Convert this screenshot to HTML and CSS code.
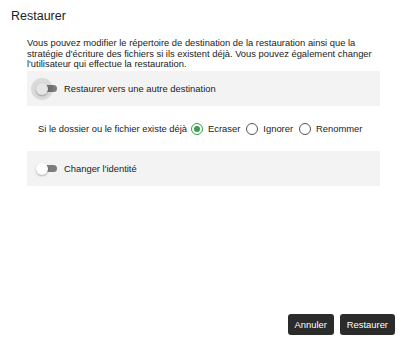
FILE: index.html
```html
<!DOCTYPE html>
<html lang="fr">
<head>
    <meta charset="UTF-8">
    <meta name="viewport" content="width=device-width, initial-scale=1.0">
    <title>Restaurer</title>
    <link rel="stylesheet" href="styles.css">
</head>
<body>
    <div class="dialog">
        <h1 class="dialog-title">Restaurer</h1>

        <div class="dialog-body">
            <p class="intro">Vous pouvez modifier le répertoire de destination de la restauration ainsi que la stratégie d'écriture des fichiers si ils existent déjà. Vous pouvez également changer l'utilisateur qui effectue la restauration.</p>

            <div class="panel">
                <span class="toggle focused"><span class="thumb"></span></span>
                <span class="panel-label">Restaurer vers une autre destination</span>
            </div>

            <div class="radio-row">
                <span class="radio-label">Si le dossier ou le fichier existe déjà</span>
                <label class="radio checked"><span class="dot"></span>Ecraser</label>
                <label class="radio"><span class="dot"></span>Ignorer</label>
                <label class="radio"><span class="dot"></span>Renommer</label>
            </div>

            <div class="panel">
                <span class="toggle"><span class="thumb"></span></span>
                <span class="panel-label">Changer l'identité</span>
            </div>
        </div>

        <div class="dialog-actions">
            <button class="btn">Annuler</button>
            <button class="btn">Restaurer</button>
        </div>
    </div>
</body>
</html>
```

FILE: styles.css
```css
body {
    margin: 0;
    font-family: "Liberation Sans", Arial, sans-serif;
    color: #222;
    background: #fff;
}
.dialog {
    height: 340px;
    box-sizing: border-box;
    padding: 8px 11px 5px 11px;
    display: flex;
    flex-direction: column;
}
.dialog-title {
    font-size: 12.5px;
    font-weight: normal;
    margin: 0 0 14px 0;
    line-height: 16px;
}
.dialog-body {
    margin-left: 16px;
    width: 353px;
    font-size: 9.4px;
}
.intro {
    margin: 0;
    line-height: 10.7px;
    padding-bottom: 1px;
}
.panel {
    background: #f3f3f3;
    height: 35px;
    display: flex;
    align-items: center;
    padding-left: 10px;
}
.radio-row {
    height: 45px;
    display: flex;
    align-items: center;
    padding-left: 11px;
}
.radio-label {
    margin-right: 4px;
}
.radio {
    display: flex;
    align-items: center;
    margin-right: 6px;
}
.radio .dot {
    width: 12px;
    height: 12px;
    border: 1px solid #555;
    border-radius: 50%;
    margin-right: 5px;
    box-sizing: border-box;
    display: flex;
    align-items: center;
    justify-content: center;
}
.radio.checked .dot {
    border-color: #36a04a;
}
.radio.checked .dot::after {
    content: "";
    width: 6px;
    height: 6px;
    border-radius: 50%;
    background: #36a04a;
}
.toggle {
    position: relative;
    width: 20px;
    height: 7px;
    background: #7d7d7d;
    border-radius: 4px;
    margin-right: 7px;
}
.toggle .thumb {
    position: absolute;
    left: -1px;
    top: -2.5px;
    width: 12px;
    height: 12px;
    border-radius: 50%;
    background: #fff;
    box-shadow: 0 1px 2px rgba(0,0,0,0.3);
}
.toggle.focused .thumb::before {
    content: "";
    position: absolute;
    left: -5px;
    top: -5px;
    width: 22px;
    height: 22px;
    border-radius: 50%;
    background: rgba(0,0,0,0.1);
}
.dialog-actions {
    margin-top: auto;
    display: flex;
    justify-content: flex-end;
    gap: 6px;
}
.btn {
    font-family: inherit;
    font-size: 9.4px;
    color: #fff;
    background: #2b2b2b;
    border: none;
    border-radius: 3px;
    height: 21px;
    padding: 0 7px;
}
```
